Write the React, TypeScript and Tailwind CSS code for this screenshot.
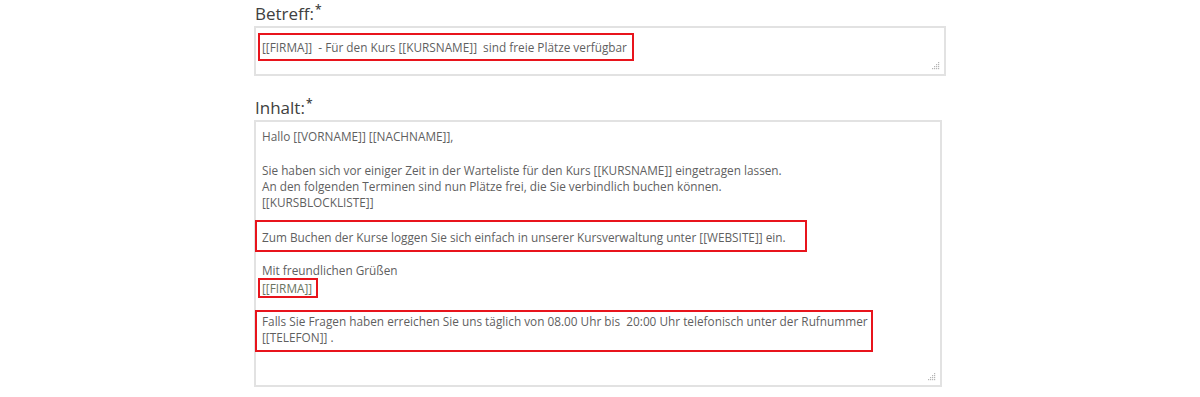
import type { ReactNode } from 'react'

const font = { fontFamily: '"Open Sans", "Liberation Sans", sans-serif' }

function ResizeGrip() {
  // little dotted triangle in the textarea corner
  const dots = [
    [6, 0],
    [6, 2],
    [4, 2],
    [6, 4],
    [4, 4],
    [2, 4],
    [6, 6],
    [4, 6],
    [2, 6],
    [0, 6],
  ]
  return (
    <svg width="8" height="8" viewBox="0 0 8 8" className="absolute right-[4px] bottom-[4px]">
      {dots.map(([x, y], i) => (
        <rect key={i} x={x} y={y} width="1.2" height="1.2" fill="#b5b5b5" />
      ))}
    </svg>
  )
}

function Label({ children }: { children: ReactNode }) {
  return (
    <div className="h-[22px] text-[17px] leading-[22px] text-[#404040] pl-[1px]">
      {children}
      <span className="relative -top-[6px] ml-[1px] text-[12px] leading-none font-semibold">*</span>
    </div>
  )
}

function Mark({ children, className = '' }: { children: ReactNode; className?: string }) {
  return <div className={`border-2 border-[#e8141c] ${className}`}>{children}</div>
}

export default function App() {
  return (
    <div className="min-h-screen bg-white" style={font}>
      <div className="w-[692px] ml-[254px] pt-[3px]">
        <Label>Betreff:</Label>

        {/* Betreff textarea */}
        <div className="relative mt-[1px] h-[50px] border-2 border-[#e2e2e2] pl-[2px] pt-[5px]">
          <Mark className="w-[376px] h-[28px] pl-[2px] text-[11.8px] leading-[24px] text-[#5f5f5f] whitespace-pre">
            {'[[FIRMA]]  - Für den Kurs [[KURSNAME]]  sind freie Plätze verfügbar'}
          </Mark>
          <ResizeGrip />
        </div>

        <div className="mt-[21px]">
          <Label>Inhalt:</Label>
        </div>

        {/* Inhalt textarea */}
        <div className="relative mt-[1px] w-[688px] h-[267px] border-2 border-[#e2e2e2] pt-[6px] text-[11.8px] leading-[16px] text-[#5f5f5f] whitespace-pre">
          <div className="pl-[6px]">
            <div>Hallo [[VORNAME]] [[NACHNAME]],</div>
            <div className="h-[18px]" />
            <div>Sie haben sich vor einiger Zeit in der Warteliste für den Kurs [[KURSNAME]] eingetragen lassen.</div>
            <div>An den folgenden Terminen sind nun Plätze frei, die Sie verbindlich buchen können.</div>
            <div>[[KURSBLOCKLISTE]]</div>
          </div>

          <Mark className="-ml-[1px] mt-[10px] w-[552px] pl-[5px] pt-[7px] pb-[5px]">
            Zum Buchen der Kurse loggen Sie sich einfach in unserer Kursverwaltung unter [[WEBSITE]] ein.
          </Mark>

          <div className="pl-[6px] mt-[10px]">Mit freundlichen Grüßen</div>
          <Mark className="ml-[2px] w-[60px] pl-[2px] text-[#6a7460]">[[FIRMA]]</Mark>

          <Mark className="-ml-[1px] mt-[12px] w-[618px] pl-[5px] pt-[1px] pb-[5px]">
            <div>Falls Sie Fragen haben erreichen Sie uns täglich von 08.00 Uhr bis  20:00 Uhr telefonisch unter der Rufnummer</div>
            <div>[[TELEFON]] .</div>
          </Mark>

          <ResizeGrip />
        </div>
      </div>
    </div>
  )
}
